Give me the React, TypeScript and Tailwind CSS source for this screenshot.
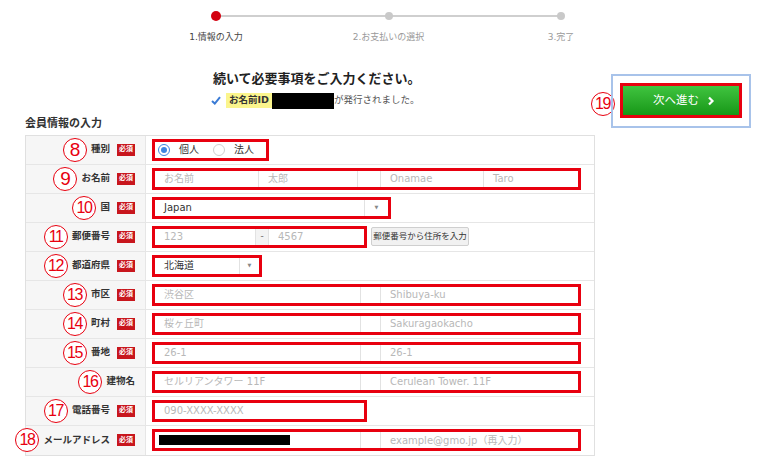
import React from "react";

const RED = "border-[#e8000f]";

const Num: React.FC<{ n: number }> = ({ n }) => (
  <span
    className={`flex h-[24px] w-[24px] shrink-0 items-center justify-center rounded-full border-[1.5px] border-[#e8000f] bg-white font-['Liberation_Sans',sans-serif] leading-none text-[#e8000f] ${
      n > 9 ? "text-[16px] tracking-[-1.5px] pr-[1px]" : "text-[19px]"
    }`}
  >
    {n}
  </span>
);

const Badge = () => (
  <span className="ml-[7px] flex h-[12px] w-[18px] shrink-0 items-center justify-center bg-[#c8161d] text-[7px] font-bold leading-none text-white">
    必須
  </span>
);

const Field: React.FC<{ text?: string; className?: string; dark?: boolean }> = ({ text, className = "", dark }) => (
  <div className={`flex h-full items-center whitespace-nowrap pl-[9px] text-[10px] ${dark ? "text-[#333]" : "text-[#b8b8b8]"} ${className}`}>
    {text}
  </div>
);

const Box: React.FC<{ w: string; children: React.ReactNode }> = ({ w, children }) => (
  <div className={`flex h-[22px] shrink-0 ${w} border-[3px] ${RED} bg-white`}>{children}</div>
);

const Pair: React.FC<{ left: React.ReactNode; right: string }> = ({ left, right }) => (
  <Box w="w-[429px]">
    <div className="w-[206px] border-r border-[#e2e2e2]">{left}</div>
    <div className="w-[19px]" />
    <div className="flex-1 border-l border-[#e2e2e2]">
      <Field text={right} />
    </div>
  </Box>
);

const Select: React.FC<{ w: string; value: string; arrowW: string }> = ({ w, value, arrowW }) => (
  <Box w={w}>
    <Field text={value} dark className="flex-1 pl-[8px] text-[10.5px]" />
    <div className={`flex ${arrowW} items-center justify-center border-l border-[#e2e2e2] text-[5px] text-[#888]`}>▼</div>
  </Box>
);

const Row: React.FC<{ n: number; label: string; req?: boolean; children: React.ReactNode }> = ({
  n,
  label,
  req = true,
  children,
}) => (
  <div className="flex h-[29px] border-b border-[#e6e6e6] last:border-b-0">
    <div className="flex w-[120px] shrink-0 items-center justify-end border-r border-[#e6e6e6] bg-[#f6f6f6] pr-[10px]">
      <Num n={n} />
      <span className="ml-[4px] whitespace-nowrap text-[9.5px] font-bold text-[#333]">{label}</span>
      {req && <Badge />}
    </div>
    <div className="flex flex-1 items-center gap-[4px] pl-[6px]">{children}</div>
  </div>
);

const Radio: React.FC<{ on?: boolean; label: string }> = ({ on, label }) => (
  <div className="flex items-center">
    <span
      className={`flex h-[12px] w-[12px] items-center justify-center rounded-full border ${
        on ? "border-[#3f86e0]" : "border-[#cfcfcf]"
      } bg-white`}
    >
      {on && <span className="h-[6px] w-[6px] rounded-full bg-[#3f86e0]" />}
    </span>
    <span className="ml-[9px] text-[10px] text-[#333]">{label}</span>
  </div>
);

export default function App() {
  return (
    <div className="relative h-[470px] w-[760px] overflow-hidden bg-white font-['DejaVu_Sans','Noto_Sans_CJK_JP',sans-serif] text-[#333]">
      {/* stepper */}
      <div className="relative ml-[166px] mt-[11px] flex w-[445px] justify-between">
        <div className="absolute left-[50px] right-[50px] top-[4px] h-[1.5px] bg-[#cfcfcf]" />
        {[
          { t: "1.情報の入力", on: true },
          { t: "2.お支払いの選択" },
          { t: "3.完了" },
        ].map((s) => (
          <div key={s.t} className="relative flex w-[100px] flex-col items-center">
            <span className={`rounded-full ${s.on ? "h-[10px] w-[10px] bg-[#d3000f]" : "mt-[1px] h-[8px] w-[8px] bg-[#c9c9c9]"}`} />
            <span className={`mt-[10px] whitespace-nowrap text-[9px] ${s.on ? "text-[#444]" : "mt-[11px] text-[#9a9a9a]"}`}>{s.t}</span>
          </div>
        ))}
      </div>

      <div className="mt-[26px] flex">
        <div className="ml-[25px] w-[570px]">
          {/* heading */}
          <div className="ml-[188px]">
            <div className="text-[13px] font-bold leading-[16px] text-[#222]">続いて必要事項をご入力ください。</div>
            <div className="mt-[6px] flex h-[16px] items-center">
              <svg width="10" height="9" viewBox="0 0 10 9" className="-ml-[2px] mr-[5px]">
                <path d="M1 5 L3.8 7.6 L9 1.2" fill="none" stroke="#3a7bd5" strokeWidth="2" />
              </svg>
              <span className="flex h-[15px] items-center bg-[#fbf58d] px-[3px] text-[9.5px] font-bold text-[#333]">お名前ID</span>
              <span className="h-[16px] w-[62px] bg-black" />
              <span className="text-[9.5px] text-[#555]">が発行されました。</span>
            </div>
          </div>

          <div className="mt-[8px] text-[11px] font-bold leading-[14px] text-[#333]">会員情報の入力</div>

          {/* table */}
          <div className="mt-[4px] border border-[#e0e0e0]">
            <Row n={8} label="種別">
              <div className="flex h-[22px] w-[117px] items-center gap-[14px] border-[3px] border-[#e8000f] pl-[3px]">
                <Radio on label="個人" />
                <Radio label="法人" />
              </div>
            </Row>
            <Row n={9} label="お名前">
              <Box w="w-[429px]">
                <div className="w-[104px] border-r border-[#e2e2e2]">
                  <Field text="お名前" />
                </div>
                <div className="w-[99px] border-r border-[#e2e2e2]">
                  <Field text="太郎" />
                </div>
                <div className="w-[22px]" />
                <div className="w-[104px] border-l border-r border-[#e2e2e2]">
                  <Field text="Onamae" />
                </div>
                <div className="flex-1">
                  <Field text="Taro" />
                </div>
              </Box>
            </Row>
            <Row n={10} label="国">
              <Select w="w-[239px]" value="Japan" arrowW="w-[24px]" />
            </Row>
            <Row n={11} label="郵便番号">
              <Box w="w-[215px]">
                <div className="w-[101px] border-r border-[#e2e2e2]">
                  <Field text="123" />
                </div>
                <div className="flex w-[12px] items-center justify-center bg-[#f3f3f3] text-[9px] text-[#666]">-</div>
                <div className="flex-1 border-l border-[#e2e2e2]">
                  <Field text="4567" className="pl-[5px]" />
                </div>
              </Box>
              <div className="flex h-[19px] w-[98px] items-center justify-center rounded-[2px] border border-[#cfcfcf] bg-[#f1f1f1] text-[8.5px] text-[#333]">
                郵便番号から住所を入力
              </div>
            </Row>
            <Row n={12} label="都道府県">
              <Select w="w-[110px]" value="北海道" arrowW="w-[20px]" />
            </Row>
            <Row n={13} label="市区">
              <Pair left={<Field text="渋谷区" />} right="Shibuya-ku" />
            </Row>
            <Row n={14} label="町村">
              <Pair left={<Field text="桜ヶ丘町" />} right="Sakuragaokacho" />
            </Row>
            <Row n={15} label="番地">
              <Pair left={<Field text="26-1" />} right="26-1" />
            </Row>
            <Row n={16} label="建物名" req={false}>
              <Pair left={<Field text="セルリアンタワー 11F" />} right="Cerulean Tower. 11F" />
            </Row>
            <Row n={17} label="電話番号">
              <Box w="w-[215px]">
                <Field text="090-XXXX-XXXX" />
              </Box>
            </Row>
            <Row n={18} label="メールアドレス">
              <Pair
                left={
                  <div className="flex h-full items-center pl-[4px]">
                    <span className="h-[10px] w-[131px] bg-black" />
                  </div>
                }
                right="example@gmo.jp（再入力）"
              />
            </Row>
          </div>
        </div>

        {/* next button */}
        <div className="ml-[-4px] mt-[3px] flex h-[54px] items-start">
          <div className="mt-[18px] mr-[-4px]">
            <Num n={19} />
          </div>
          <div className="flex h-[54px] w-[140px] items-center justify-center border-2 border-[#a8c3ea]">
            <div className="flex h-[35px] w-[122px] border-[3px] border-[#e8000f]">
              <div className="flex flex-1 items-center justify-center bg-gradient-to-b from-[#3fc43f] to-[#169816] text-[11.5px] text-white">
                <span className="ml-[6px]">次へ進む</span>
                <svg width="8" height="10" viewBox="0 0 8 10" className="ml-[8px]">
                  <path d="M2 1.5 L5.5 5 L2 8.5" fill="none" stroke="white" strokeWidth="2.2" />
                </svg>
              </div>
            </div>
          </div>
        </div>
      </div>
    </div>
  );
}
